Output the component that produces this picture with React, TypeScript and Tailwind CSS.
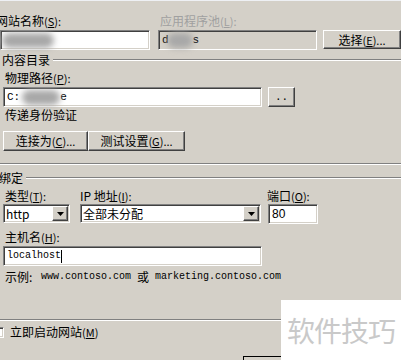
import React from 'react';

const FONT = '"Noto Sans CJK SC", "Liberation Sans", sans-serif';
const MONO = '"Liberation Mono", "Noto Sans CJK SC", monospace';

// classic win2k sunken / raised borders
const sunken =
  'border border-t-[#808080] border-l-[#808080] border-r-white border-b-white shadow-[inset_1px_1px_0_#404040,inset_-1px_-1px_0_#d4d0c8]';
const raised =
  'border border-t-white border-l-white border-r-[#404040] border-b-[#404040] shadow-[inset_-1px_-1px_0_#808080]';

function Label({ text, hot, className = '' }: { text: string; hot: string; className?: string }) {
  return (
    <div className={`h-[14px] text-[12px] leading-[14px] whitespace-nowrap ${className}`}>
      {text}
      <span className="text-[11px]">(</span>
      <span className="underline text-[11px]">{hot}</span>
      <span className="text-[11px]">):</span>
    </div>
  );
}

function Blur({ w, className = '' }: { w: number; className?: string }) {
  return (
    <span
      className={`inline-block h-[15px] rounded-full bg-[#a8a8a8] blur-[3px] align-middle ${className}`}
      style={{ width: w }}
    />
  );
}

function Select({ value, w }: { value: string; w: string }) {
  return (
    <div className={`${sunken} ${w} h-[19px] bg-white flex items-center`}>
      <span className="flex-1 pl-[2px] text-[12px] leading-[14px] whitespace-nowrap">{value}</span>
      <div className={`${raised} w-[16px] h-[15px] mr-px bg-[#d4d0c8] flex items-center justify-center`}>
        <svg width="7" height="4" viewBox="0 0 7 4">
          <path d="M0 0h7L3.5 4z" fill="#000" />
        </svg>
      </div>
    </div>
  );
}

function Etched({ className = '' }: { className?: string }) {
  return (
    <div className={className}>
      <div className="h-px bg-[#808080]" />
      <div className="h-px bg-white" />
    </div>
  );
}

export default function App() {
  return (
    <div
      className="relative w-[401px] h-[360px] overflow-hidden bg-[#d4d0c8] text-black"
      style={{ fontFamily: FONT }}
    >
      <div className="h-px bg-[#eef0f4]" />

      {/* site name / app pool */}
      <div className="flex mt-[13px]">
        <div className="w-[150px]">
          <Label text="网站名称" hot="S" className="-ml-[4px]" />
          <div className={`${sunken} mt-[2px] h-[20px] bg-white flex items-center`}>
            <Blur w={52} className="ml-[1px]" />
          </div>
        </div>
        <div className="w-[159px] ml-[8px]">
          <Label text="应用程序池" hot="L" className="ml-[2px] text-[#a0a0a0]" />
          <div className={`${sunken} mt-[2px] h-[20px] bg-[#d4d0c8] flex items-center pl-[3px]`}>
            <span className="text-[11px] leading-[14px]" style={{ fontFamily: MONO }}>d</span>
            <Blur w={26} className="-ml-[2px]" />
            <span className="text-[11px] leading-[14px]" style={{ fontFamily: MONO }}>s</span>
          </div>
        </div>
        <div
          className={`${raised} mt-[16px] ml-[6px] w-[78px] h-[19px] bg-[#d4d0c8] flex items-center justify-center text-[12px] leading-[14px] whitespace-nowrap`}
        >
          选择<span className="text-[11px]">(<u>E</u>)...</span>
        </div>
      </div>

      {/* content directory group */}
      <div className="flex items-center mt-[3px] h-[14px]">
        <span className="ml-[2px] text-[12px] leading-[14px] pr-[3px]">内容目录</span>
        <Etched className="flex-1" />
      </div>
      <Label text="物理路径" hot="P" className="ml-[5px] mt-[4px]" />
      <div className="flex mt-[2px] ml-[3px]">
        <div className={`${sunken} w-[259px] h-[20px] bg-white flex items-center pl-[3px]`}>
          <span className="text-[11px]" style={{ fontFamily: MONO }}>C:</span>
          <Blur w={38} className="ml-[2px]" />
          <span className="text-[11px]" style={{ fontFamily: MONO }}>e</span>
        </div>
        <div
          className={`${raised} ml-[6px] w-[27px] h-[20px] bg-[#d4d0c8] flex items-center justify-center text-[11px]`}
          style={{ fontFamily: MONO }}
        >
          ..
        </div>
      </div>
      <div className="ml-[5px] mt-px h-[14px] text-[12px] leading-[14px]">传递身份验证</div>
      <div className="flex ml-[3px] mt-[9px]">
        <div
          className={`${raised} w-[85px] h-[20px] bg-[#d4d0c8] flex items-center justify-center text-[12px] leading-[14px] whitespace-nowrap`}
        >
          连接为<span className="text-[11px]">(<u>C</u>)...</span>
        </div>
        <div
          className={`${raised} w-[97px] h-[20px] bg-[#d4d0c8] flex items-center justify-center text-[12px] leading-[14px] whitespace-nowrap`}
        >
          测试设置<span className="text-[11px]">(<u>G</u>)...</span>
        </div>
      </div>
      <Etched className="mt-[12px]" />

      {/* binding group */}
      <div className="flex items-center mt-[6px] h-[14px]">
        <span className="-ml-px text-[12px] leading-[14px] pr-[3px]">绑定</span>
        <Etched className="flex-1" />
      </div>
      <div className="flex mt-[4px]">
        <Label text="类型" hot="T" className="ml-[5px] w-[75px]" />
        <Label text="IP 地址" hot="I" className="w-[187px]" />
        <Label text="端口" hot="O" />
      </div>
      <div className="flex mt-px ml-[3px]">
        <Select value="http" w="w-[67px]" />
        <div className="ml-[10px]">
          <Select value="全部未分配" w="w-[181px]" />
        </div>
        <div
          className={`${sunken} ml-[7px] w-[50px] h-[20px] bg-white flex items-center pl-[3px] text-[12px]`}
          style={{ fontFamily: '"Liberation Sans", sans-serif' }}
        >
          80
        </div>
      </div>
      <Label text="主机名" hot="H" className="ml-[5px] mt-[6px]" />
      <div className={`${sunken} ml-[3px] mt-[2px] w-[259px] h-[20px] bg-white flex items-center pl-[3px]`}>
        <span className="text-[10px] leading-[14px]" style={{ fontFamily: MONO }}>localhost</span>
        <span className="w-px h-[13px] bg-black" />
      </div>
      <div className="flex items-center ml-[5px] mt-[4px] h-[14px] text-[12px] leading-[14px] whitespace-nowrap">
        <span className="w-[24px]">示例</span>
        <span className="w-[12px]">:</span>
        <span className="w-[90px] text-[10px]" style={{ fontFamily: MONO }}>www.contoso.com</span>
        <span className="ml-[6px] w-[12px]">或</span>
        <span className="ml-[6px] text-[10px]" style={{ fontFamily: MONO }}>marketing.contoso.com</span>
      </div>

      <Etched className="mt-[35px]" />
      <div className="flex items-center mt-[4px] h-[14px]">
        <div className={`${sunken} -ml-[4px] w-[8px] h-[11px] bg-white`} />
        <span className="ml-[6px] text-[12px] leading-[14px]">
          立即启动网站<span className="text-[11px]">(<u>M</u>)</span>
        </span>
      </div>
      <div className="ml-[243px] mt-[17px] w-[60px] h-[10px] border-t border-l border-black" />

      {/* watermark */}
      <div className="absolute left-[281px] top-[300px] w-[120px] h-[60px] bg-white flex items-center pl-[6px]">
        <span className="text-[28px] leading-[32px] text-[#c9c9c9] tracking-[-1px]">软件技巧</span>
      </div>
    </div>
  );
}
